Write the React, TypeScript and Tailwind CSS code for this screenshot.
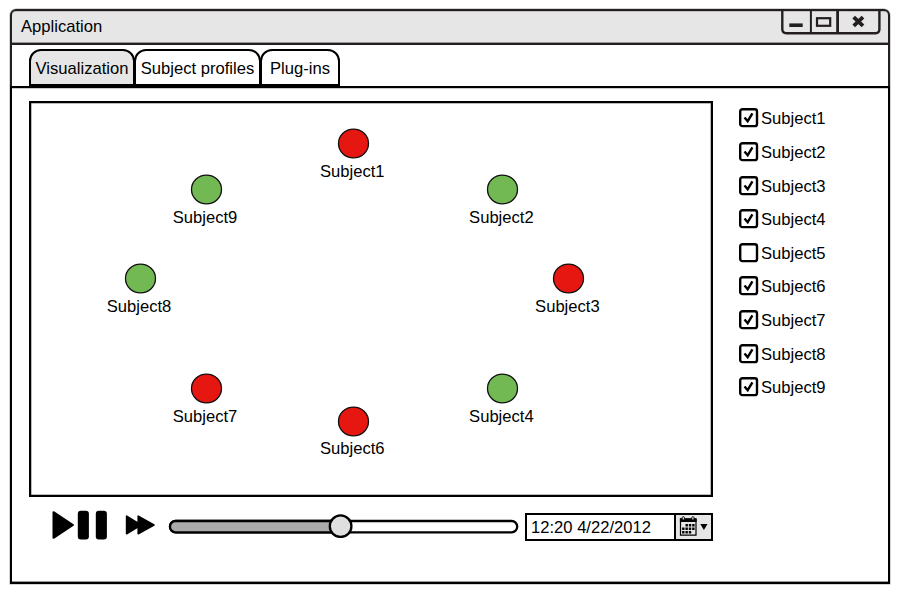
import React from "react";

const nodes = [
  { id: 1, x: 353.6, y: 143.9, ly: 1, red: true },
  { id: 2, x: 502.7, y: 189.3, ly: 1.2, red: false },
  { id: 3, x: 568.7, y: 278.3, ly: 1.2, red: true },
  { id: 4, x: 502.7, y: 388.7, ly: 0.8, red: false },
  { id: 6, x: 353.6, y: 421, ly: 0.3, red: true },
  { id: 7, x: 206.3, y: 388.7, ly: 0.8, red: true },
  { id: 8, x: 140.3, y: 278.3, ly: 1.2, red: false },
  { id: 9, x: 206.3, y: 189.3, ly: 1.2, red: false },
];

const subjects = [1, 2, 3, 4, 5, 6, 7, 8, 9];

function WindowButtons() {
  return (
    <svg className="mr-[7px] -mt-[2px] shrink-0" width="101" height="27" viewBox="780 9 101 27" fill="none" stroke="#231f20" strokeWidth="2.4">
      <path d="M782.3 10V29.3Q782.3 33.2 786.3 33.2H875.7Q879.4 33.2 879.4 29.3V10" />
      <path d="M810.9 11V33" strokeWidth="2" />
      <path d="M837.6 11V33" strokeWidth="2.8" />
      <path d="M789.3 25.2H802.7" strokeWidth="3.6" />
      <rect x="817" y="18.2" width="13.2" height="7.6" strokeWidth="2.2" />
      <path d="M853.7 17.1L863 25.9M863 17.1L853.7 25.9" strokeWidth="3.8" />
    </svg>
  );
}

function Check({ on }: { on: boolean }) {
  return (
    <svg width="20" height="20" viewBox="0 0 20 20" fill="none" stroke="#000">
      <rect x="1.2" y="1.3" width="16.8" height="16.8" rx="2.2" strokeWidth="2.4" />
      {on && <path d="M5.5 9.4L8.7 13.2L13.4 5.4" strokeWidth="2.4" />}
    </svg>
  );
}

function Calendar() {
  return (
    <svg width="34" height="24" viewBox="676.5 515 34 24">
      <path d="M681 519H696.5V535.2H681Z" fill="#e6e6e6" stroke="#000" strokeWidth="1.2" />
      <path d="M680.4 518.3H697.1V522H680.4Z" />
      <rect x="682.7" y="516.7" width="2.2" height="3.4" rx="1" fill="#e6e6e6" stroke="#000" strokeWidth=".9" />
      <rect x="692.3" y="516.7" width="2.2" height="3.4" rx="1" fill="#e6e6e6" stroke="#000" strokeWidth=".9" />
      <path d="M686 525.2H695.4M682.6 528.7H695.4M682.6 532.2H692.2" stroke="#000" strokeWidth="2.4" strokeDasharray="2.4 0.95" />
      <path d="M700.8 524H708L704.4 530Z" />
    </svg>
  );
}

export default function App() {
  return (
    <div className="h-[592px] w-[904px] overflow-hidden bg-white pl-[10px] pt-[9px] font-['Liberation_Sans',Arial,sans-serif] text-[16.6px] leading-5 text-black">
      <div className="flex h-[575px] w-[880px] flex-col rounded-t-[6px] shadow-[0_0_0_0.5px_#77777799]">
        <header className="flex h-[36px] shrink-0 items-start justify-between rounded-t-[6px] border-2 border-[#231f20] bg-[#e6e6e6] shadow-[inset_0_1px_0_#99999980,inset_0_-1px_0_#999999]">
          <h1 className="ml-[9px] mt-[6px]">Application</h1>
          <WindowButtons />
        </header>
        <nav className="flex h-[41px] shrink-0 items-end border-x-2 border-[#231f20] pl-[17px]">
          <button className="h-[37px] w-[106px] whitespace-nowrap rounded-t-[12px] border-2 border-black bg-[#e6e6e6] pt-[2px]">Visualization</button>
          <button className="-ml-px h-[37px] w-[127px] whitespace-nowrap rounded-t-[12px] border-2 border-black bg-white pt-[2px]">Subject profiles</button>
          <button className="-ml-px h-[37px] w-[80px] whitespace-nowrap rounded-t-[12px] border-2 border-black bg-white pt-[2px]">Plug-ins</button>
        </nav>
        <main className="flex min-h-0 flex-1 border-2 border-black shadow-[inset_0_1px_0_#cccccc,inset_0_-1px_0_#999999]">
          <section className="ml-[17px] mt-[13px] w-[684px] shrink-0">
            <div className="relative h-[396px] border-2 border-black shadow-[inset_0_0_0_0.5px_#777777]">
              {nodes.map((n) => (
                <div
                  key={n.id}
                  className="absolute flex w-20 -translate-x-1/2 flex-col items-center"
                  style={{ left: n.x - 31, top: n.y - 15.5 - 103 }}
                >
                  <svg width="33" height="31" viewBox="0 0 33 31">
                    <ellipse cx="16.5" cy="15.5" rx="15" ry="14.4" fill={n.red ? "#e61610" : "#73b953"} stroke="#111" strokeWidth="1.3" />
                  </svg>
                  <span className="mr-[2.6px]" style={{ marginTop: 2 + n.ly }}>Subject{n.id}</span>
                </div>
              ))}
            </div>
            <div className="mt-[11px] flex h-[34px] items-center">
              <svg className="ml-[23px]" width="55" height="30" viewBox="52 510 55 30" stroke="#000" strokeLinejoin="round">
                <path d="M53.5 512.2V537.8L73 525Z" strokeWidth="2" />
                <rect x="77.8" y="510.7" width="11.1" height="28.7" rx="3" stroke="none" />
                <rect x="95.8" y="510.7" width="11.1" height="28.7" rx="3" stroke="none" />
              </svg>
              <svg className="ml-[18px]" width="31" height="22" viewBox="125 514 31 22" stroke="#000" strokeWidth="1.6" strokeLinejoin="round">
                <path d="M126.6 516.2V533.8L141 525Z" />
                <path d="M138.2 516.2V533.8L154 525Z" />
              </svg>
              <svg className="ml-[12px] mt-[2px]" width="352" height="24" viewBox="168 514 352 24" stroke="#000" strokeWidth="2.3">
                <rect x="170" y="521" width="347.2" height="11.3" rx="5.6" fill="#fff" />
                <path d="M340 521H175.6A5.65 5.65 0 0 0 175.6 532.3H340Z" fill="#aaa" />
                <circle cx="340.6" cy="526.2" r="10.8" fill="#dfdfdf" />
              </svg>
              <div className="ml-[5px] mt-[3px] flex h-[28px] w-[188px] shrink-0 border-2 border-black">
                <div className="flex-1 pl-[4px] pt-[3px]">12:20 4/22/2012</div>
                <div className="w-[37px] border-l-2 border-black bg-[#e6e6e6]">
                  <Calendar />
                </div>
              </div>
            </div>
          </section>
          <aside className="ml-[26px] mt-[13.5px] w-[110px]">
            {subjects.map((s) => (
              <label key={s} className="flex h-[33.62px] items-center gap-[2px]">
                <Check on={s !== 5} />
                <span className="pt-[2px]">Subject{s}</span>
              </label>
            ))}
          </aside>
        </main>
      </div>
    </div>
  );
}
